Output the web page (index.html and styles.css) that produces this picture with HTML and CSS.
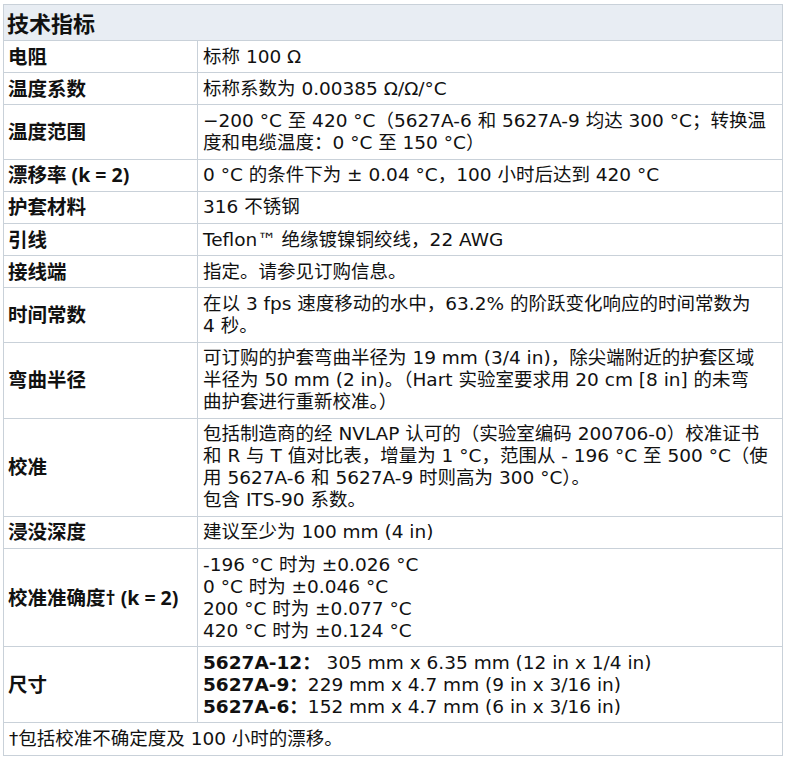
FILE: index.html
```html
<!DOCTYPE html>
<html lang="zh-CN">
<head>
<meta charset="utf-8">
<title>技术指标</title>
<link rel="stylesheet" href="styles.css">
</head>
<body>
<table class="spec">
  <colgroup>
    <col class="col-label">
    <col class="col-value">
  </colgroup>
  <thead>
    <tr><th colspan="2" class="title">技术指标</th></tr>
  </thead>
  <tbody>
    <tr><th>电阻</th><td>标称 100 Ω</td></tr>
    <tr><th>温度系数</th><td>标称系数为 0.00385 Ω/Ω/°C</td></tr>
    <tr><th>温度范围</th><td>−200 °C 至 420 °C（5627A-6 和 5627A-9 均达 300 °C；转换温<br>度和电缆温度：0 °C 至 150 °C）</td></tr>
    <tr><th>漂移率 (k = 2)</th><td>0 °C 的条件下为 ± 0.04 °C，100 小时后达到 420 °C</td></tr>
    <tr><th>护套材料</th><td>316 不锈钢</td></tr>
    <tr><th>引线</th><td>Teflon™ 绝缘镀镍铜绞线，22 AWG</td></tr>
    <tr><th>接线端</th><td>指定。请参见订购信息。</td></tr>
    <tr><th>时间常数</th><td>在以 3 fps 速度移动的水中，63.2% 的阶跃变化响应的时间常数为<br>4 秒。</td></tr>
    <tr><th>弯曲半径</th><td>可订购的护套弯曲半径为 19 mm (3/4 in)，除尖端附近的护套区域<br>半径为 50 mm (2 in)。（Hart 实验室要求用 20 cm [8 in] 的未弯<br>曲护套进行重新校准。）</td></tr>
    <tr><th>校准</th><td>包括制造商的经 NVLAP 认可的（实验室编码 200706-0）校准证书<br>和 R 与 T 值对比表，增量为 1 °C，范围从 - 196 °C 至 500 °C（使<br>用 5627A-6 和 5627A-9 时则高为 300 °C）。<br>包含 ITS-90 系数。</td></tr>
    <tr><th>浸没深度</th><td>建议至少为 100 mm (4 in)</td></tr>
    <tr><th>校准准确度† (k = 2)</th><td>-196 °C 时为 ±0.026 °C<br>0 °C 时为 ±0.046 °C<br>200 °C 时为 ±0.077 °C<br>420 °C 时为 ±0.124 °C</td></tr>
    <tr><th>尺寸</th><td><b>5627A-12：</b> 305 mm x 6.35 mm (12 in x 1/4 in)<br><b>5627A-9：</b>229 mm x 4.7 mm (9 in x 3/16 in)<br><b>5627A-6：</b>152 mm x 4.7 mm (6 in x 3/16 in)</td></tr>
  </tbody>
  <tfoot>
    <tr><td colspan="2" class="note">†包括校准不确定度及 100 小时的漂移。</td></tr>
  </tfoot>
</table>
</body>
</html>
```
FILE: styles.css
```css
html, body {
  background: #ffffff;
}
body {
  margin: 4px 7px 0 3px;
  font-family: "DejaVu Sans", "Noto Sans CJK SC", sans-serif;
  font-size: 18.5px;
  color: #111111;
}
.spec {
  width: 780px;
  border-collapse: collapse;
  table-layout: fixed;
}
.col-label {
  width: 194px;
}
.spec th,
.spec td {
  border: 1px solid #c9d1d9;
  padding: 4.6px 4px;
  line-height: 22px;
  text-align: left;
  vertical-align: middle;
  white-space: nowrap;
}
.spec tbody th {
  font-weight: bold;
  font-family: "Open Sans", "Noto Sans CJK SC", sans-serif;
  font-size: 19.5px;
}
.spec tbody td {
  font-weight: normal;
  padding-left: 5px;
}
.spec .title {
  background: #e8edf3;
  font-size: 22px;
  font-weight: bold;
  padding: 6px 3px 6px;
  line-height: 23px;
  font-family: "Noto Sans CJK SC", sans-serif;
}
.spec td b {
  font-weight: bold;
}
.spec .note {
  padding-left: 5px;
}
```
